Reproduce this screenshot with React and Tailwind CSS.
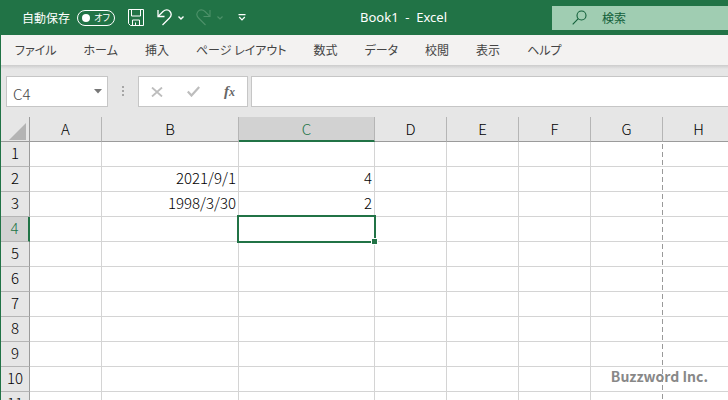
import React, { useState } from 'react';

const tabs = ['ファイル', 'ホーム', '挿入', 'ページ レイアウト', '数式', 'データ', '校閲', '表示', 'ヘルプ'];

const columns = [
  { name: 'A', width: 'w-[72px]' },
  { name: 'B', width: 'w-[137px]' },
  { name: 'C', width: 'w-[136px]' },
  { name: 'D', width: 'w-[72px]' },
  { name: 'E', width: 'w-[72px]' },
  { name: 'F', width: 'w-[72px]' },
  { name: 'G', width: 'w-[72px]' },
  { name: 'H', width: 'w-[72px]' },
];

const rows = [1, 2, 3, 4, 5, 6, 7, 8, 9, 10, 11];

const cells = {
  B2: '2021/9/1',
  C2: '4',
  B3: '1998/3/30',
  C3: '2',
};

function TitleBar() {
  const [autoSave, setAutoSave] = useState(false);

  return (
    <header className="flex h-[35px] shrink-0 items-center bg-[#217346] pl-[22px] text-white">
      <span className="text-[12px]">自動保存</span>
      <button
        type="button"
        aria-label="自動保存"
        aria-pressed={autoSave}
        onClick={() => setAutoSave(!autoSave)}
        className="ml-[7px] flex h-4 w-[38px] items-center justify-between rounded-full border border-white pr-1 pl-1"
      >
        <span className="size-2 shrink-0 rounded-full bg-white"></span>
        <span className="text-[9px] leading-none [font-feature-settings:'palt']">{autoSave ? 'オン' : 'オフ'}</span>
      </button>
      <button type="button" aria-label="保存" className="ml-[13px]">
        <svg width="16" height="17" viewBox="0 0 16 17" fill="none" stroke="currentColor">
          <path d="M0.5 0.5h15v16h-13l-2-2z" />
          <path d="M3.5 0.5v6.5h9v-6.5" />
          <path d="M4.5 16.5v-5.5h7v5.5M7.5 13.5v3" />
        </svg>
      </button>
      <button type="button" aria-label="元に戻す" className="ml-[13px] flex items-center gap-[6px]">
        <svg width="15" height="17" viewBox="0 0 15 17" fill="none" stroke="currentColor" strokeWidth="1.3">
          <path d="M1 1v6.5h6.5" />
          <path d="M1.3 7.200L6 2.5C8.5 0.2 11.5 0.5 13 2.5c1.7 2.2 1.2 4.8-0.5 6.5L5.5 16" />
        </svg>
        <svg width="6" height="4" viewBox="0 0 6 4" fill="none" stroke="currentColor" strokeWidth="1.4">
          <path d="M0.5 0.5L3 3l2.5-2.5" />
        </svg>
      </button>
      <button type="button" aria-label="やり直し" className="ml-[12px] flex items-center gap-[6px] text-[#4d9169]">
        <svg width="15" height="17" viewBox="0 0 15 17" fill="none" stroke="currentColor" strokeWidth="1.1">
          <path d="M14 1v6.5H7.5" />
          <path d="M13.7 7.2L9 2.5C6.5 0.2 3.5 0.5 2 2.5c-1.7 2.2-1.2 4.8 0.5 6.5L9.5 16" />
        </svg>
        <svg width="6" height="4" viewBox="0 0 6 4" fill="none" stroke="currentColor" strokeWidth="1.2">
          <path d="M0.5 0.5L3 3l2.5-2.5" />
        </svg>
      </button>
      <button type="button" aria-label="クイック アクセス ツール バーのユーザー設定" className="ml-[15px]">
        <svg width="8" height="7" viewBox="0 0 8 7" fill="none" stroke="currentColor" strokeWidth="1.2">
          <path d="M0.5 0.6h7M1.2 3l2.8 2.8L6.8 3" />
        </svg>
      </button>
      <h1 className="ml-[114px] font-['Noto_Sans'] text-[13px] whitespace-pre">Book1  -  Excel</h1>
      <label className="ml-auto flex h-6 w-[176px] items-center bg-[#a0cdb2] pl-5 text-[#12603a]">
        <svg className="shrink-0" width="15" height="15" viewBox="0 0 15 15" fill="none" stroke="currentColor" strokeWidth="1.1">
          <circle cx="9.5" cy="5.5" r="4.5" />
          <path d="M6.3 8.7L0.7 14.3" />
        </svg>
        <input
          type="search"
          aria-label="検索"
          placeholder="検索"
          className="ml-[15px] w-full min-w-0 text-[12px] outline-none placeholder:text-[#12603a]"
        />
      </label>
    </header>
  );
}

function Ribbon() {
  return (
    <nav className="flex h-[30px] shrink-0 items-center gap-[27px] border-l border-[#217346] bg-[#f3f2f1] pl-[14px] text-[12px] text-[#444444] [font-feature-settings:'palt']">
      {tabs.map((tab) => (
        <button key={tab} type="button" className="whitespace-nowrap">
          {tab}
        </button>
      ))}
    </nav>
  );
}

function FormulaBar() {
  const [formula, setFormula] = useState('');

  return (
    <div className="flex h-[52px] shrink-0 items-start border-l border-[#217346] bg-[linear-gradient(#cccccc,#e6e6e6_4px)] pt-[11px] pl-[5px]">
      <div className="flex h-[31px] w-[102px] items-center border border-[#c6c6c6] bg-white pr-[5px] pl-[6px]">
        <input
          type="text"
          aria-label="名前ボックス"
          defaultValue="C4"
          className="w-full min-w-0 pt-1 text-[15px] leading-6 font-light text-[#444444] outline-none"
        />
        <button type="button" aria-label="名前の一覧">
          <svg width="8" height="5" viewBox="0 0 8 5" fill="#777777">
            <path d="M0 0h8L4 4.5z" />
          </svg>
        </button>
      </div>
      <svg className="mt-[10px] ml-[13px]" width="4" height="11" viewBox="0 0 4 11" fill="#a6a6a6">
        <path d="M1 0h2v2H1zM1 4h2v2H1zM1 8h2v2H1z" />
      </svg>
      <div className="ml-[13px] flex h-[31px] w-[110px] items-center justify-between border border-[#c6c6c6] bg-white pr-3 pl-3">
        <button type="button" aria-label="キャンセル">
          <svg width="12" height="10" viewBox="0 0 12 10" fill="none" stroke="#bdbdbd" strokeWidth="1.8">
            <path d="M1 0.5l10 9M11 0.5L1 9.5" />
          </svg>
        </button>
        <button type="button" aria-label="入力">
          <svg width="13" height="11" viewBox="0 0 13 11" fill="none" stroke="#bdbdbd" strokeWidth="2.2">
            <path d="M0.8 5.5l3.7 4L12.2 1" />
          </svg>
        </button>
        <button
          type="button"
          aria-label="関数の挿入"
          className="font-['Liberation_Serif',serif] text-[15px] leading-none font-bold text-[#666666] italic"
        >
          f<span className="text-[12px]">x</span>
        </button>
      </div>
      <input
        type="text"
        aria-label="数式バー"
        value={formula}
        onChange={(e) => setFormula(e.target.value)}
        className="ml-[3px] h-[31px] min-w-0 flex-1 border border-r-0 border-[#c6c6c6] bg-white px-2 text-[15px] outline-none"
      />
    </div>
  );
}

function Sheet() {
  const [selected, setSelected] = useState('C4');

  const cellClass = (name) => {
    if (name === 'G') {
      // page break line
      return 'bg-[linear-gradient(transparent_2px,#999999_2px,#999999_7px,transparent_7px)] bg-[length:1px_8px] bg-right-top bg-repeat-y';
    }
    return 'border-r';
  };

  return (
    <table className="w-full table-fixed border-separate border-spacing-0 border-l border-[#217346] bg-white text-[15px] leading-[22px] font-light text-black">
      <colgroup>
        <col className="w-[29px]" />
        {columns.map((col) => (
          <col key={col.name} className={col.width} />
        ))}
      </colgroup>
      <thead>
        <tr className="h-[25px] bg-[#e6e6e6]">
          <th className="border-r border-b border-[#9b9b9b] p-0" aria-label="すべて選択">
            <svg className="mt-1 ml-2" width="17" height="17" viewBox="0 0 17 17" fill="#b4b4b4">
              <path d="M17 0v17H0z" />
            </svg>
          </th>
          {columns.map((col) => (
            <th
              key={col.name}
              className={
                col.name === selected[0]
                  ? 'border-r border-b-2 border-r-[#b5b5b5] border-b-[#217346] bg-[#d2d2d2] p-0 font-light text-[#217346]'
                  : 'border-r border-b border-r-[#b5b5b5] border-b-[#9b9b9b] p-0 font-light'
              }
            >
              {col.name}
            </th>
          ))}
        </tr>
      </thead>
      <tbody>
        {rows.map((row) => (
          <tr key={row} className="h-[25px]">
            <th
              className={
                String(row) === selected.slice(1)
                  ? 'border-r-2 border-b border-r-[#217346] border-b-[#b5b5b5] bg-[#d2d2d2] p-0 align-top font-light text-[#217346]'
                  : 'border-r border-b border-r-[#9b9b9b] border-b-[#b5b5b5] bg-[#e6e6e6] p-0 align-top font-light'
              }
            >
              {row}
            </th>
            {columns.map((col) => (
              <td
                key={col.name}
                onClick={() => setSelected(col.name + row)}
                className={`relative border-b border-[#d4d4d4] p-0 pr-[2px] text-right align-top ${cellClass(col.name)}`}
              >
                {cells[col.name + row]}
                {selected === col.name + row && (
                  <div className="absolute -top-[2px] -right-[2px] -bottom-[2px] -left-[2px] z-10 border-2 border-[#217346]">
                    <span className="absolute -right-[4px] -bottom-[4px] size-[7px] border border-white bg-[#217346]"></span>
                  </div>
                )}
              </td>
            ))}
          </tr>
        ))}
      </tbody>
    </table>
  );
}

function App() {
  return (
    <div className="relative flex h-screen flex-col overflow-hidden bg-[#e6e6e6] font-['Noto_Sans_CJK_JP',sans-serif]">
      <TitleBar />
      <Ribbon />
      <FormulaBar />
      <Sheet />
      <div className="absolute right-5 bottom-[14px] text-[14px] leading-5 font-bold text-[#888888]">Buzzword Inc.</div>
    </div>
  );
}

export default App;
